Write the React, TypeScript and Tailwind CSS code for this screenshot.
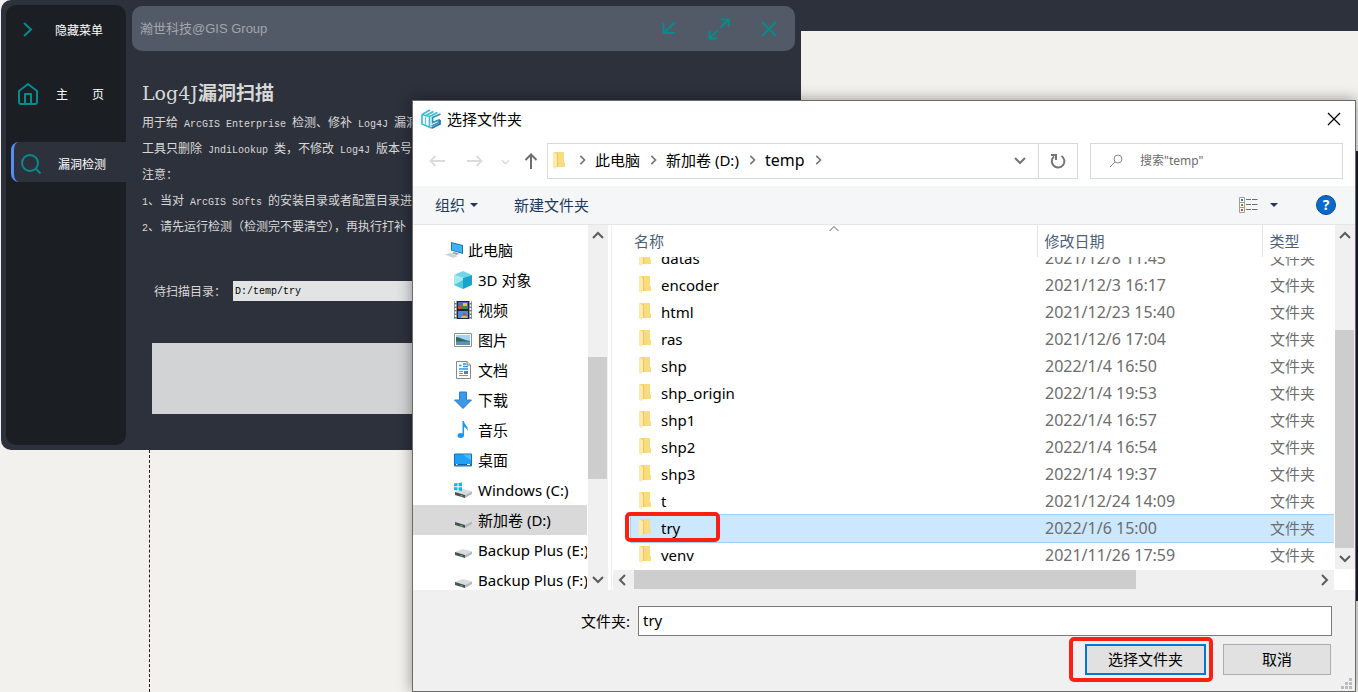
import React from "react";

const NOTES = [
  "用于给 ArcGIS Enterprise 检测、修补 Log4J 漏洞",
  "工具只删除 JndiLookup 类，不修改 Log4J 版本号",
  "注意：",
  "1、当对 ArcGIS Softs 的安装目录或者配置目录进",
  "2、请先运行检测（检测完不要清空），再执行打补",
];

const FILES = [
  { name: "datas", date: "2021/12/8 11:45" },
  { name: "encoder", date: "2021/12/3 16:17" },
  { name: "html", date: "2021/12/23 15:40" },
  { name: "ras", date: "2021/12/6 17:04" },
  { name: "shp", date: "2022/1/4 16:50" },
  { name: "shp_origin", date: "2022/1/4 19:53" },
  { name: "shp1", date: "2022/1/4 16:57" },
  { name: "shp2", date: "2022/1/4 16:54" },
  { name: "shp3", date: "2022/1/4 19:37" },
  { name: "t", date: "2021/12/24 14:09" },
  { name: "try", date: "2022/1/6 15:00" },
  { name: "venv", date: "2021/11/26 17:59" },
];

/* Sets Latin runs in a half-width monospace beside full-width Chinese text. */
function Mixed({ text }: { text: string }) {
  return (
    <>
      {text.split(/([\x20-\x7e]+)/).map((part, i) =>
        i % 2 ? (
          <span key={i} className="whitespace-pre font-['Liberation_Mono',monospace] text-[10px]">{part}</span>
        ) : (
          part
        ),
      )}
    </>
  );
}

type Dir = "up" | "down" | "left" | "right";
const CHEVRONS: Record<Dir, string> = {
  up: "M1 8 6 3l5 5",
  down: "M1 4l5 5 5-5",
  left: "M8 1 3 6l5 5",
  right: "M4 1l5 5-5 5",
};

function Chevron({ dir, className }: { dir: Dir; className: string }) {
  return (
    <svg viewBox="0 0 12 12" className={className} fill="none" stroke="currentColor" strokeWidth="2" aria-hidden="true">
      <path d={CHEVRONS[dir]} />
    </svg>
  );
}

function Folder() {
  return (
    <svg viewBox="0 0 12 17" className="h-[17px] w-3 shrink-0" aria-hidden="true">
      <path d="M1 0h10v10.500l1 .5v4H3z" fill="#f7d774" />
      <path d="M5 0h6v10l1 .5V15H6z" fill="#f9dc80" />
      <path d="M3 1h2v14H3z" fill="#eac768" />
      <path d="M0 0l4 2v12l-1.500 3L0 15.500z" fill="#fde9a9" />
    </svg>
  );
}

function Logo() {
  return (
    <svg viewBox="0 0 20 20" className="size-5 shrink-0" fill="none" strokeWidth="1.700" aria-hidden="true">
      <path d="M1 5.500 9 1M4 7 12.500 2.500M16.500 3.500 8.500 7.500v10M1 5.500l7.500 2M1 5.500V15l9.500 4" stroke="#3cbdd6" />
      <path d="M4.500 8v8" stroke="#5bcbe0" strokeWidth="1.200" />
      <path d="M19.500 5 11.500 8.500v5l6.500-2.500v2.500L10.500 17" stroke="#2f8fc0" />
      <path d="M10.500 19.200 19 15v-4" stroke="#2174a8" />
    </svg>
  );
}

function DriveShape() {
  return (
    <>
      <path d="M1 11l8-3 9 2.500-7 3.500z" fill="#d9dbde" />
      <path d="M1 11l10 3v3L1 14z" fill="#4b4f54" />
      <path d="M11 14l7-3.500v2.500l-7 4z" fill="#b4b7bb" />
      <path d="M6.500 14.500l2 .6" stroke="#3fd13f" strokeWidth="1.500" />
    </>
  );
}

const TREE_ICONS: Record<string, React.ReactNode> = {
  pc: (
    <>
      <path d="M6 1l12 3v9L6 9.500z" fill="#1878b8" />
      <path d="M7 2.300l10 2.500v7L7 9z" fill="#3fb1f5" />
      <path d="M9 11l5 1.500-2 1.500-5-1.500z" fill="#9aa3aa" />
      <path d="M0 13.500l5-1.500 8 3-5 2z" fill="#cfd4d8" />
    </>
  ),
  cube: (
    <>
      <path d="M0 4l9-4 9 4-9 3z" fill="#6fd6e6" />
      <path d="M0 4l9 3v11l-9-4z" fill="#a5e9f0" />
      <path d="M9 7l9-3v10l-9 4z" fill="#17a5cf" />
      <path d="M0 14l9-5v9z" fill="#4fc9dc" />
    </>
  ),
  film: (
    <>
      <path d="M0 0h18v18H0z" fill="#7d8187" />
      <path d="M1.500 0v18M16.500 0v18" stroke="#fff" strokeWidth="1.500" strokeDasharray="2 1.500" />
      <path d="M3 0h12v18H3z" fill="#20242c" />
      <path d="M4 1h10v7H4z" fill="#426fc4" />
      <path d="M4 10h10v7H4z" fill="#4c8be0" />
      <path d="M4 5l3-1 1 4H4zM9 12h3v2H9z" fill="#db4632" />
      <path d="M9 2h4v3H9zM8 15h4l2 2H7z" fill="#e9bf3b" />
      <path d="M8 5h5v3H8z" fill="#3f8a3c" />
    </>
  ),
  picture: (
    <>
      <path d="M.5 2.500h17v13H.5z" fill="#fff" stroke="#8d9296" />
      <path d="M2 4h14v10H2z" fill="#a9d3f5" />
      <path d="M2 6c4 0 7 3 14 4v1.500H2z" fill="#2f6a57" />
      <path d="M2 10.500h14V14H2z" fill="#5d92bf" />
    </>
  ),
  doc: (
    <>
      <path d="M2.500.5H13l3.500 3.500v13.500h-14z" fill="#fff" stroke="#858a8f" />
      <path d="M5 4.500h2.500M9 3h3M9 5.500h5M5 8h9" stroke="#2a9bea" strokeWidth="1.500" />
      <path d="M5 10.500h4M5 12.500h4M5 14.500h9" stroke="#8a9096" />
      <path d="M10 10h4v3h-4z" fill="#4f84a8" />
      <path d="M13 .5V4h3.500" fill="#ddd" stroke="#858a8f" />
    </>
  ),
  download: <path d="M5.500 1h7v8h5L9 17.500.5 9h5z" fill="#3d98e8" stroke="#2f7fcb" />,
  music: (
    <>
      <path d="M8.500 0h1.500c0 4 5 5 3.500 10-.5-2.500-2-3.500-3.500-4v9h-1.500z" fill="#159cf2" />
      <ellipse cx="6.700" cy="14.500" rx="3.200" ry="2.500" fill="#159cf2" />
    </>
  ),
  desktop: (
    <>
      <path d="M.5 3h17v12H.5z" fill="#1fa0f5" stroke="#1272b8" />
      <path d="M9 3.500h8v6z" fill="#55baf9" />
      <path d="M1 13.500h16" stroke="#12629e" />
      <path d="M2 13.500h1.500M13 13.500h3" stroke="#fff" />
    </>
  ),
  windows: (
    <>
      <DriveShape />
      <path d="M0 2.500l3.500-.5v3.300H0zM4.500 1.900 8 1.500v3.800H4.500zM0 6.300h3.500v3.200L0 9zM4.500 6.300H8V10l-3.500-.4z" fill="#12b5ee" />
    </>
  ),
  drive: <DriveShape />,
};

const TREE = [
  { icon: "cube", label: "3D 对象" },
  { icon: "film", label: "视频" },
  { icon: "picture", label: "图片" },
  { icon: "doc", label: "文档" },
  { icon: "download", label: "下载" },
  { icon: "music", label: "音乐" },
  { icon: "desktop", label: "桌面" },
  { icon: "windows", label: "Windows (C:)" },
  { icon: "drive", label: "新加卷 (D:)", active: true },
  { icon: "drive", label: "Backup Plus (E:)" },
  { icon: "drive", label: "Backup Plus (F:)" },
];

function TreeIcon({ name }: { name: string }) {
  return (
    <svg viewBox="0 0 18 18" className="size-[18px] shrink-0" fill="none" aria-hidden="true">
      {TREE_ICONS[name]}
    </svg>
  );
}

function ScannerWindow() {
  return (
    <section className="absolute top-0 left-px flex h-[450px] w-[800px] rounded-l-[10px] bg-[#2d313c] font-['Noto_Sans_CJK_SC',sans-serif] text-xs text-[#d8d8d8]">
      <nav className="my-[5px] ml-[5px] flex w-[120px] shrink-0 flex-col rounded-[10px] bg-[#1b1e23] pt-[5px] text-white">
        <button className="flex h-10 items-center pl-[14px] text-left">
          <svg viewBox="0 0 20 20" className="size-5 text-[#078b8b]" fill="none" stroke="currentColor" strokeWidth="2">
            <path d="M4 3l7 6.500L4 16" />
          </svg>
          <span className="pl-[15px]">隐藏菜单</span>
        </button>
        <button className="mt-6 flex h-10 items-center pl-3 text-left">
          <svg viewBox="0 0 20 22" className="h-[22px] w-5 text-[#078b8b]" fill="none" stroke="currentColor" strokeWidth="2" strokeLinejoin="round">
            <path d="M1 8l9-7 9 7v11a2 2 0 0 1-2 2H3a2 2 0 0 1-2-2z" />
            <path d="M7 21V11h6v10" />
          </svg>
          <span className="flex w-[66px] justify-between pl-[18px]">
            <span>主</span>
            <span>页</span>
          </span>
        </button>
        <button className="mt-7 ml-[5px] flex h-10 items-center rounded-l-lg border-l-3 border-[#5a8bf0] bg-[#2d313c] pt-1 pl-[7px] text-left">
          <svg viewBox="0 0 20 20" className="size-5 text-[#078b8b]" fill="none" stroke="currentColor" strokeWidth="2">
            <circle cx="9" cy="9" r="8" />
            <path d="M14.500 14.500l5 5" />
          </svg>
          <span className="pl-[17px]">漏洞检测</span>
        </button>
      </nav>

      <div className="flex min-w-0 flex-1 flex-col pt-[6px] pr-[6px] pl-[6px]">
        <header className="flex h-[45px] shrink-0 items-center rounded-[10px] bg-[#525a67] pr-[13px] pl-2 text-[#a2a6ac]">
          <span className="flex-1 pt-px font-['Liberation_Sans','Noto_Sans_CJK_SC',sans-serif] text-[13px]">
            瀚世科技@GIS Group
          </span>
          <div className="flex gap-[24px] text-[#078b8b]">
            <button aria-label="最小化" className="size-[26px]">
              <svg viewBox="0 0 26 26" fill="none" stroke="currentColor" strokeWidth="2">
                <path d="M18.500 6.500 8 17M7.500 7v10H19" />
              </svg>
            </button>
            <button aria-label="最大化" className="size-[26px]">
              <svg viewBox="0 0 26 26" fill="none" stroke="currentColor" strokeWidth="2">
                <path d="M14.500 11.500l7.500-7.500M15 3.500h7.500V11M11.500 14.500 4 22M3.500 15v7.500H11" />
              </svg>
            </button>
            <button aria-label="关闭" className="size-[26px]">
              <svg viewBox="0 0 26 26" fill="none" stroke="currentColor" strokeWidth="2">
                <path d="M6 6l14 14M20 6 6 20" />
              </svg>
            </button>
          </div>
        </header>

        <main className="flex flex-1 flex-col pt-7 pl-[10px]">
          <h1 className="h-[30px] font-['DejaVu_Serif',serif] text-[19px] leading-[26px]">
            Log4J<span className="font-['Noto_Sans_CJK_SC',sans-serif] font-bold">漏洞扫描</span>
          </h1>
          <div className="h-[130px] overflow-hidden leading-[26px]">
            {NOTES.map((line) => (
              <p key={line} className="h-[26px] whitespace-nowrap">
                <Mixed text={line} />
              </p>
            ))}
          </div>
          <div className="mt-[42px] flex h-5 items-center pl-3">
            <label htmlFor="scan-path" className="w-[79px]">待扫描目录：</label>
            <input
              id="scan-path"
              defaultValue="D:/temp/try"
              className="h-5 min-w-0 flex-1 bg-[#e2e3e5] px-[2px] font-['Liberation_Mono',monospace] text-[10px] text-black outline-none"
            />
          </div>
          <textarea aria-label="扫描日志" className="mt-[42px] ml-[10px] h-[71px] resize-none bg-[#d2d3d5] outline-none" />
        </main>
      </div>
    </section>
  );
}

function FolderDialog() {
  return (
    <section
      role="dialog"
      aria-labelledby="dialog-title"
      className="absolute top-[100px] right-[2px] bottom-0 left-[412px] flex flex-col border border-[#6b6b6b] bg-white font-['Noto_Sans','Noto_Sans_CJK_SC',sans-serif] text-[15px] leading-5 text-black shadow-[0_0_14px_rgba(0,0,0,0.4)]"
    >
      <header className="flex h-[38px] shrink-0 items-center pr-[14px] pb-[2px] pl-2">
        <Logo />
        <h2 id="dialog-title" className="flex-1 pl-[6px]">选择文件夹</h2>
        <button aria-label="关闭" className="size-[14px]">
          <svg viewBox="0 0 14 14" fill="none" stroke="currentColor" strokeWidth="1.200">
            <path d="M1 1l12 12M13 1 1 13" />
          </svg>
        </button>
      </header>

      <div className="mt-1 mb-[7px] flex h-9 shrink-0 items-center pr-3 pl-4">
        <button aria-label="后退" className="mr-[22px] text-[#dcdcdc]">
          <svg viewBox="0 0 16 16" className="size-4" fill="none" stroke="currentColor" strokeWidth="1.800">
            <path d="M16 8H1.500M6.500 3l-5 5 5 5" />
          </svg>
        </button>
        <button aria-label="前进" className="mr-[18px] text-[#dcdcdc]">
          <svg viewBox="0 0 16 16" className="size-4" fill="none" stroke="currentColor" strokeWidth="1.800">
            <path d="M0 8h14.500M9.500 3l5 5-5 5" />
          </svg>
        </button>
        <button aria-label="最近位置" className="mr-[13px] text-[#dcdcdc]">
          <Chevron dir="down" className="size-[9px]" />
        </button>
        <button aria-label="上移" className="mr-2 text-[#6f6f6f]">
          <svg viewBox="0 0 16 18" className="h-[18px] w-4" fill="none" stroke="currentColor" strokeWidth="2">
            <path d="M8 17V3M2.500 8 8 2.500 13.500 8" />
          </svg>
        </button>
        <div className="flex h-9 flex-1 items-center border border-[#d9d9d9] pb-[2px] pl-[5px] text-[#767676]">
          <Folder />
          <Chevron dir="right" className="mr-2 ml-3 size-[10px]" />
          <a href="#pc" className="text-black">此电脑</a>
          <Chevron dir="right" className="mx-2 size-[10px]" />
          <a href="#d" className="text-black">新加卷 (D:)</a>
          <Chevron dir="right" className="mx-2 size-[10px]" />
          <a href="#temp" className="text-base leading-5 text-black">temp</a>
          <Chevron dir="right" className="mx-2 size-[10px]" />
          <button aria-label="历史记录" className="mr-3 ml-auto">
            <Chevron dir="down" className="size-3" />
          </button>
          <button aria-label="刷新" className="-mb-[2px] flex h-[34px] w-[39px] items-center justify-center border-l border-[#d9d9d9]">
            <svg viewBox="0 0 16 16" className="size-4" fill="none" stroke="currentColor" strokeWidth="2">
              <path d="M11.500 3a6.300 6.300 0 1 1-7.500.500" />
              <path d="M1 2h5v5" />
            </svg>
          </button>
        </div>
        <label className="ml-3 flex h-9 w-[253px] items-center border border-[#d9d9d9] pl-[18px]">
          <svg viewBox="0 0 14 14" className="size-[14px] shrink-0 text-[#8a8a8a]" fill="none" stroke="currentColor">
            <circle cx="9" cy="5" r="4" />
            <path d="M6 8l-5 5" />
          </svg>
          <input
            aria-label="搜索"
            placeholder={'搜索"temp"'}
            className="min-w-0 flex-1 pl-[17px] text-xs outline-none placeholder:text-[#6d6d6d]"
          />
        </label>
      </div>

      <div className="flex h-[39px] shrink-0 items-center border-b border-[#e4e7ea] bg-[#f4f6f8] pr-[19px] pl-[22px] text-[#1e395b]">
        <button className="mr-9 flex items-center gap-[5px]">
          组织
          <svg viewBox="0 0 8 4" className="h-1 w-2" fill="currentColor"><path d="M0 0h8L4 4z" /></svg>
        </button>
        <button className="mr-auto">新建文件夹</button>
        <button aria-label="视图" className="mr-3">
          <svg viewBox="0 0 19 16" className="h-4 w-[19px]" fill="none">
            <path d="M.5.500h5v15h-5zM.5 5.500h5M.5 10.500h5" fill="#fff" stroke="#9a9f9a" />
            <path d="M7 2.500h5m1 0h5.500M7 7.500h5m1 0h5.500M7 12.500h5m1 0h5.500" stroke="#6f6f6f" />
            <path d="M2 2h2v2H2z" fill="#2b8585" />
            <path d="M2 7h2v2H2z" fill="#7b8b1e" />
            <path d="M2 12h2v2H2z" fill="#c94a1c" />
          </svg>
        </button>
        <button aria-label="更多视图" className="mr-[38px]">
          <svg viewBox="0 0 8 4" className="h-1 w-2" fill="currentColor"><path d="M0 0h8L4 4z" /></svg>
        </button>
        <button aria-label="帮助" className="flex size-5 items-center justify-center rounded-full border border-[#0b4f91] bg-[#0a6acb] text-sm font-bold text-white">
          ?
        </button>
      </div>

      <div className="flex h-[365px] shrink-0">
        <ul className="w-[174px] shrink-0 overflow-hidden pt-[10px]">
          <li className="flex h-[30px] items-center gap-[5px] pl-8">
            <TreeIcon name="pc" />
            此电脑
          </li>
          {TREE.map((item) => (
            <li
              key={item.label}
              className={
                item.active
                  ? "flex h-[30px] items-center gap-[6px] bg-[#d9d9d9] pl-[41px] whitespace-nowrap"
                  : "flex h-[30px] items-center gap-[6px] pl-[41px] whitespace-nowrap"
              }
            >
              <TreeIcon name={item.icon} />
              {item.label}
            </li>
          ))}
        </ul>
        <div className="ml-px flex w-5 shrink-0 flex-col items-center justify-between bg-[#f0f0f0] py-[5px] text-[#5c5c5c]">
          <Chevron dir="up" className="size-3" />
          <div className="mt-[115px] mb-auto h-[122px] w-full border-r border-[#f0f0f0] bg-[#cdcdcd]" />
          <Chevron dir="down" className="size-3" />
        </div>
        <div className="ml-[3px] flex min-w-0 flex-1 border-l border-[#eeeeee]">
          <div className="flex min-w-0 flex-1 flex-col">
            <div className="h-[345px] overflow-hidden pl-[19px]">
              <table className="w-full table-fixed border-collapse text-left">
                <colgroup>
                  <col />
                  <col className="w-[225px]" />
                  <col className="w-[72px]" />
                </colgroup>
                <thead className="text-[#4c607a]">
                  <tr className="h-8">
                    <th className="relative p-0 pl-[3px] font-normal">
                      名称
                      <svg viewBox="0 0 10 5" className="absolute top-px left-1/2 h-[5px] w-[10px] -translate-x-1/2" fill="none" stroke="#5c5c5c">
                        <path d="M.5 5 5 .5 9.500 5" />
                      </svg>
                    </th>
                    <th className="border-l border-[#e5e5e5] p-0 pl-[7px] font-normal">修改日期</th>
                    <th className="border-l border-[#e5e5e5] p-0 pl-[7px] font-normal">类型</th>
                  </tr>
                </thead>
                <tbody>
                  {FILES.map((file, i) => {
                    const selected = file.name === "try";
                    const clip = i === 0 ? "flex h-[15px] items-end overflow-hidden" : "flex h-[27px] items-center";
                    return (
                      <tr key={file.name} className={selected ? "bg-[#cce8ff] outline outline-[#99d1ff]" : ""}>
                        <td className="relative p-0">
                          <div className={clip}>
                            <div className="flex h-[27px] shrink-0 items-center gap-[10px] pb-[2px] pl-2">
                              <Folder />
                              {file.name}
                            </div>
                          </div>
                          {selected && (
                            <span className="absolute -top-[3px] -left-[6px] h-[30px] w-[95px] rounded-[5px] border-4 border-[#fb2012]" />
                          )}
                        </td>
                        <td className="p-0 text-base leading-5 text-[#6d6d6d]">
                          <div className={clip}>
                            <div className="flex h-[27px] shrink-0 items-center pb-[2px] pl-2">{file.date}</div>
                          </div>
                        </td>
                        <td className="p-0 text-[#6d6d6d]">
                          <div className={clip}>
                            <div className="flex h-[27px] shrink-0 items-center pb-[2px] pl-2">文件夹</div>
                          </div>
                        </td>
                      </tr>
                    );
                  })}
                </tbody>
              </table>
            </div>
            <div className="ml-px flex h-5 items-center bg-[#f0f0f0] px-1 text-[#5c5c5c]">
              <Chevron dir="left" className="size-3 shrink-0" />
              <div className="mr-auto ml-[5px] h-full w-[502px] border-b border-[#f0f0f0] bg-[#cdcdcd]" />
              <Chevron dir="right" className="size-3 shrink-0" />
            </div>
          </div>
          <div className="mb-[21px] ml-px flex w-5 shrink-0 flex-col items-center bg-[#f0f0f0] py-[5px] text-[#5c5c5c]">
            <Chevron dir="up" className="size-3 shrink-0" />
            <div className="mt-[88px] mb-auto h-[218px] w-full border-r border-[#f0f0f0] bg-[#cdcdcd]" />
            <Chevron dir="down" className="size-3 shrink-0" />
          </div>
        </div>
      </div>

      <footer className="relative flex flex-1 flex-col bg-[#f0f0f0] pt-4 pr-[23px]">
        <div className="flex h-[30px] items-center">
          <label htmlFor="folder-name" className="w-[225px] pr-2 text-right">文件夹:</label>
          <input
            id="folder-name"
            defaultValue="try"
            className="h-[30px] min-w-0 flex-1 border border-[#7a7a7a] bg-white px-1 pb-[3px] outline-none"
          />
        </div>
        <div className="mt-2 flex justify-end gap-[17px] pr-px">
          <div className="relative">
            <button className="h-[31px] w-[121px] border-2 border-[#0078d7] bg-[#e1e1e1] pb-[2px]">选择文件夹</button>
            <span className="pointer-events-none absolute -top-[7px] -right-[7px] -bottom-[7px] -left-[16px] rounded-[5px] border-4 border-[#fb2012]" />
          </div>
          <button className="h-[31px] w-[108px] border border-[#adadad] bg-[#e1e1e1] pb-[2px]">取消</button>
        </div>
        <svg viewBox="0 0 11 11" className="absolute right-[3px] bottom-[2px] size-[11px]" fill="#bcbcbc" aria-hidden="true">
          <path d="M8 0h3v3H8zM4 4h3v3H4zM8 4h3v3H8zM0 8h3v3H0zM4 8h3v3H4zM8 8h3v3H8z" />
        </svg>
      </footer>
    </section>
  );
}

export default function App() {
  return (
    <div className="relative h-screen min-h-[692px] w-full overflow-hidden bg-[#f3f1ee]">
      <div className="ml-4 h-[31px] bg-[#2d313c]" />
      <div className="absolute top-[450px] bottom-0 left-[149px] border-l border-dashed border-[#2a1a1c]" />
      <div className="absolute top-[151px] right-0 h-[450px] w-2 bg-[#1b212c]" />
      <ScannerWindow />
      <FolderDialog />
    </div>
  );
}
